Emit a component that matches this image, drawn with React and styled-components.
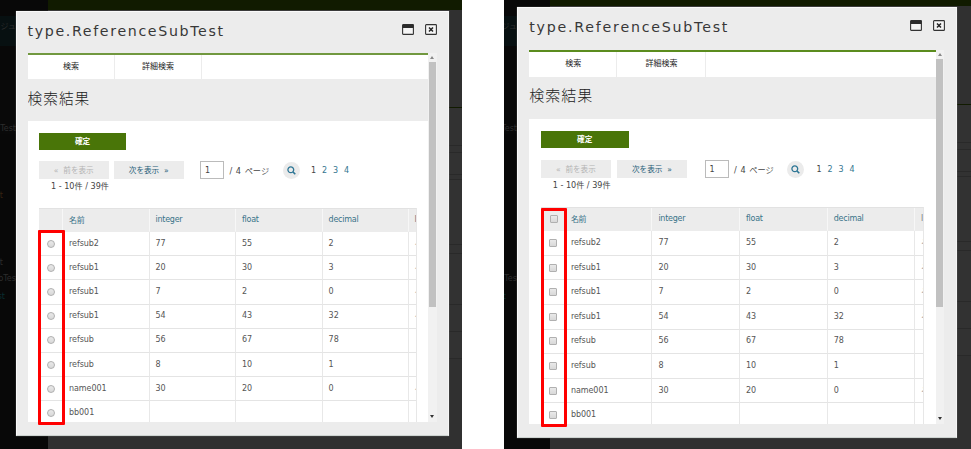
import React from "react";
import styled, { createGlobalStyle, ThemeProvider } from "styled-components";

const Global = createGlobalStyle`
  * { box-sizing: border-box; }
  body { margin: 0; background: #fff; overflow: hidden; font-family: "DejaVu Sans", "Noto Sans CJK JP", sans-serif; }
`;

const single = {
  w: 462, side: 48, bar: 10, edge: 107,
  mx: 16, my: 11, mw: 433, mh: 425, padX: 10.5,
  head: 41, body: 400.5, bodyH: 368.5, line: "#71983f",
  titleTop: 10, titleSpace: 1.65, iconTop: 12, iconGap: 11,
  tab: 87, tabH: 24, h2: 42, h2Size: 14.7,
  btn: 87, btnH: 17.5, padTop: 11.5, gap1: 11, pb: 69.5, pbGap: 5.5, inputGap: 16, searchGap: 11, numsGap: 11.5,
  count: 16, tableGap: 12.5, cols: "24px 86.5px 86.5px 86.6px 86.4px 86px", headRow: 23.5, row: 24.2, tableW: 377.5,
  thumb: 245, redX: 38, redY: 230, redW: 27, redH: 195, round: "50%",
};
const multi = {
  ...single,
  w: 467, side: 46, bar: 6, edge: 104,
  mx: 13, my: 7, mw: 440, mh: 431, padX: 11.2,
  head: 42, body: 406.5, bodyH: 373.5, line: "#5b8c1e",
  titleSpace: 1.78,
  tab: 88.2, tabH: 24.5, h2: 42.5, h2Size: 15,
  btn: 88, padTop: 11.5, gap1: 12, pb: 70.3, pbGap: 5.8, inputGap: 17, numsGap: 12.5,
  count: 16.5, tableGap: 12, cols: "24.2px 87.5px 87.6px 87.8px 87.7px 86px", headRow: 23.7, row: 24.6, tableW: 383,
  thumb: 248, redX: 37, redY: 208, redW: 26, redH: 218.5, round: "1px",
};

const Page = styled.main` display: flex; gap: 42px; width: 971px; height: 449px; `;
const Scene = styled.section`
  position: relative; display: flex; width: ${p => p.theme.w}px; height: 449px; overflow: hidden; flex: none; background: #303030;
`;
const SideNav = styled.div`
  width: ${p => p.theme.side}px; flex: none; background: #080808; display: flex; flex-direction: column;
`;
const NavItem = styled.div`
  height: ${p => p.$h}px; padding-bottom: ${p => p.$pb ?? 2}px; display: flex; align-items: flex-end; justify-content: flex-end;
  width: ${p => p.theme.mx + (p.$over || 0)}px; font-size: 8px; line-height: 10px; color: ${p => p.$c || "#2d2d2d"}; background: ${p => p.$bg || "transparent"};
  white-space: nowrap; min-width: 0;
`;
const Behind = styled.div` flex: 1; display: flex; flex-direction: column; `;
const TopBar = styled.div` height: ${p => p.theme.bar}px; background: #111b00; `;
const Band = styled.div` height: ${p => p.$h}px; background: ${p => p.$bg || "#323232"}; border-bottom: 1px solid ${p => p.$line || "#292929"}; `;

const Modal = styled.div`
  position: absolute; left: ${p => p.theme.mx}px; top: ${p => p.theme.my}px; width: ${p => p.theme.mw}px; height: ${p => p.theme.mh}px;
  background: #ececec; border: 1px solid #fafafa; border-bottom-color: #cdd3d0; border-right-color: #f5f5f5;
  box-shadow: 0 0 1px #777; padding: 0 11px 0 ${p => p.theme.padX}px;
`;
const Header = styled.header` display: flex; justify-content: space-between; height: ${p => p.theme.head}px; `;
const Title = styled.h1`
  margin: ${p => p.theme.titleTop - 1.5}px 0 0 0; font-size: 14.2px; line-height: 20px; font-weight: 400; letter-spacing: ${p => p.theme.titleSpace}px; color: #383838; white-space: nowrap;
`;
const Tools = styled.div` display: flex; gap: ${p => p.theme.iconGap}px; padding-top: ${p => p.theme.iconTop}px; svg { display: block; } `;
const Scroller = styled.div` display: flex; height: ${p => p.theme.bodyH}px; `;
const Content = styled.div`
  width: ${p => p.theme.body}px; flex: none; height: 100%; border-top: 2px solid ${p => p.theme.line}; display: flex; flex-direction: column; overflow: hidden;
`;
const Tabs = styled.nav` display: flex; height: ${p => p.theme.tabH}px; background: #fff; flex: none; `;
const Tab = styled.div`
  width: ${p => p.theme.tab}px; border-right: 1px solid #ececec; text-align: center; font-size: 8px; line-height: 23px; color: #222; padding-left: 1px;
`;
const Heading = styled.h2`
  margin: 0; height: ${p => p.theme.h2}px; line-height: 39px; font-size: ${p => p.theme.h2Size}px; font-weight: 300; letter-spacing: 1px; color: #222; flex: none;
`;
const Panel = styled.div` background: #fff; flex: 1; min-height: 0; padding: ${p => p.theme.padTop}px 0 0 11.5px; overflow: hidden; `;
const Confirm = styled.button`
  display: block; border: 0; padding: 0 0 1px; width: ${p => p.theme.btn}px; height: ${p => p.theme.btnH}px; background: #497508; color: #fff;
  font: 700 7.6px/16px "Noto Sans CJK JP", sans-serif; margin-bottom: ${p => p.theme.gap1}px;
`;
const Pager = styled.div` display: flex; align-items: center; height: 18px; font-size: 8px; color: #444; white-space: nowrap; `;
const PageButton = styled.button`
  width: ${p => p.theme.pb}px; height: 17.5px; margin-right: ${p => p.theme.pbGap}px; padding: 0; border: 0; background: #ececec;
  font: 400 7.6px/17px "DejaVu Sans", "Noto Sans CJK JP", sans-serif; color: ${p => p.$off ? "#b4b4b4" : "#1f5c78"}; white-space: pre;
`;
const PageInput = styled.div`
  width: 24px; height: 18px; margin-left: ${p => p.theme.inputGap - p.theme.pbGap + 0.5}px; border: 1px solid #bbb; padding-left: 4px; line-height: 17px; background: #fff;
`;
const Total = styled.span` margin-left: 5.5px; width: 42px; font-size: 8.2px; word-spacing: 1px; `;
const SearchButton = styled.span`
  display: grid; place-items: center; width: 17px; height: 17px; border-radius: 50%; background: #ebebeb; margin-left: ${p => p.theme.searchGap}px;
`;
const Numbers = styled.span` display: flex; gap: 5.9px; margin-left: ${p => p.theme.numsGap}px; color: #347690; span:first-child { color: #444; } `;
const Count = styled.div` height: ${p => p.theme.count}px; padding-left: 12px; font-size: 8.1px; line-height: 15px; color: #444; white-space: nowrap; `;
const Table = styled.div`
  margin-top: ${p => p.theme.tableGap}px; width: ${p => p.theme.tableW}px; overflow: hidden; border-right: 1px solid #e7e7e7; border-top: 1px solid #e2e2e2;
`;
const Row = styled.div`
  display: grid; grid-template-columns: ${p => p.theme.cols}; height: ${p => (p.$head ? p.theme.headRow : p.theme.row)}px;
  background: ${p => (p.$head ? "#ececec" : "#fff")}; color: ${p => (p.$head ? "#397389" : "#555")}; font-size: 8px; letter-spacing: ${p => (p.$head ? "-0.25px" : "-0.05px")};
`;
const Cell = styled.div`
  padding: 0 0 1px ${p => (p.$dim ? 5.5 : 6)}px; display: flex; align-items: center; border-right: 1px solid ${p => (p.$head ? "#f7f7f7" : "#e8e8e8")}; border-bottom: 1px solid ${p => (p.$head ? "#ececec" : "#e4e4e4")};
  white-space: nowrap; color: ${p => (p.$dim ? "#777" : "inherit")};
`;
const PickCell = styled(Cell)` padding: 0 0 0 ${p => (p.$head ? 9 : 8)}px; `;
const Picker = styled.span`
  flex: none; width: 8px; height: 8px; border: 1px solid #b0b0b0; border-radius: ${p => p.theme.round}; background: linear-gradient(#e9e9e9, #d8d8d8);
`;
const Scrollbar = styled.div`
  width: 8.5px; height: 100%; background: #f1f1f1; display: flex; flex-direction: column; align-items: center; justify-content: space-between; padding: 0 0 4px;
`;
const ThumbGroup = styled.div` display: flex; flex-direction: column; align-items: center; gap: 2.5px; `;
const Arrow = styled.div`
  width: 0; height: 0; border: 2.5px solid transparent; margin-top: 1px;
  ${p => p.$down ? "border-top: 3px solid #333; border-bottom: 0;" : "border-bottom: 3px solid #888;"}
`;
const Thumb = styled.div` width: 7px; height: ${p => p.theme.thumb}px; background: #c1c1c1; `;
const RedFrame = styled.div`
  position: absolute; left: ${p => p.theme.redX}px; top: ${p => p.theme.redY}px; width: ${p => p.theme.redW}px; height: ${p => p.theme.redH}px;
  border: 3px solid #f00; border-radius: 1px;
`;

const rows = [
  ["refsub2", 77, 55, 2, 1], ["refsub1", 20, 30, 3, 1], ["refsub1", 7, 2, 0, 1], ["refsub1", 54, 43, 32, 1],
  ["refsub", 56, 67, 78, 0], ["refsub", 8, 10, 1, 0], ["name001", 30, 20, 0, 1], ["bb001", "", "", "", 0],
];

function WindowIcon() {
  return <svg width="12" height="11"><rect x=".6" y=".6" width="10.8" height="9.8" rx=".7" fill="#f5f5f5" stroke="#333" strokeWidth="1.1" /><path d="M.5.5h11V4H.5z" fill="#2b2b2b" /></svg>;
}
function CloseIcon() {
  return <svg width="12" height="11"><rect x=".6" y=".6" width="10.8" height="9.8" rx=".7" fill="#f5f5f5" stroke="#333" strokeWidth="1.1" /><path d="M4 3.5 8 7.5M8 3.5 4 7.5" stroke="#222" strokeWidth="1.5" /></svg>;
}
function SearchIcon() {
  return <svg width="9" height="9"><circle cx="3.8" cy="3.8" r="2.9" fill="none" stroke="#2d7695" strokeWidth="1.3" /><path d="m5.9 5.9 2.4 2.4" stroke="#2d7695" strokeWidth="1.5" /></svg>;
}

function Dialog({ theme, selectAll }) {
  return (
    <ThemeProvider theme={theme}>
      <Scene>
        <SideNav>
          <NavItem $h={16} />
          <NavItem $h={18} $bg="#071011">イジュ</NavItem>
          <NavItem $h={12} $bg="#071011" />
          <NavItem $h={34} />
          <NavItem $h={54} $bg="#090909" $pb={0}>Test</NavItem>
          <NavItem $h={67} $over={-13} $c="#382411" $pb={0}>t</NavItem>
          <NavItem $h={67} $over={-13} $pb={0}>t</NavItem>
          <NavItem $h={16} $over={3} $pb={0}>bTest</NavItem>
          <NavItem $h={18} $over={-11} $c="#092f31" $pb={0}>st</NavItem>
        </SideNav>
        <Behind>
          <TopBar />
          <Band $h={theme.edge - theme.bar + 1} $bg="#303030" $line="#111b00" />
          <Band $h={38} /><Band $h={7} /><Band $h={22} /><Band $h={5} /><Band $h={65} /><Band $h={9} /><Band $h={51} /><Band $h={27} /><Band $h={27} />
        </Behind>
        <Modal>
          <Header>
            <Title>type.ReferenceSubTest</Title>
            <Tools><WindowIcon /><CloseIcon /></Tools>
          </Header>
          <Scroller>
            <Content>
              <Tabs><Tab>検索</Tab><Tab>詳細検索</Tab></Tabs>
              <Heading>検索結果</Heading>
              <Panel>
                <Confirm>確定</Confirm>
                <Pager>
                  <PageButton $off>{"«  前を表示"}</PageButton>
                  <PageButton>{"次を表示  »"}</PageButton>
                  <PageInput>1</PageInput>
                  <Total>/ 4 ページ</Total>
                  <SearchButton><SearchIcon /></SearchButton>
                  <Numbers><span>1</span><span>2</span><span>3</span><span>4</span></Numbers>
                </Pager>
                <Count>1 - 10件 / 39件</Count>
                <Table>
                  <Row $head>
                    <PickCell $head>{selectAll && <Picker />}</PickCell>
                    {["名前", "integer", "float", "decimal"].map(t => <Cell key={t} $head>{t}</Cell>)}
                    <Cell $head $dim>l</Cell>
                  </Row>
                  {rows.map((r, i) => (
                    <Row key={i}>
                      <PickCell><Picker /></PickCell>
                      {r.slice(0, 4).map((v, j) => <Cell key={j}>{v}</Cell>)}
                      <Cell $dim>{r[4] ? "そ" : ""}</Cell>
                    </Row>
                  ))}
                </Table>
              </Panel>
            </Content>
            <Scrollbar>
              <ThumbGroup><Arrow /><Thumb /></ThumbGroup>
              <Arrow $down />
            </Scrollbar>
          </Scroller>
        </Modal>
        <RedFrame />
      </Scene>
    </ThemeProvider>
  );
}

export default function App() {
  return <><Global /><Page><Dialog theme={single} /><Dialog theme={multi} selectAll /></Page></>;
}
